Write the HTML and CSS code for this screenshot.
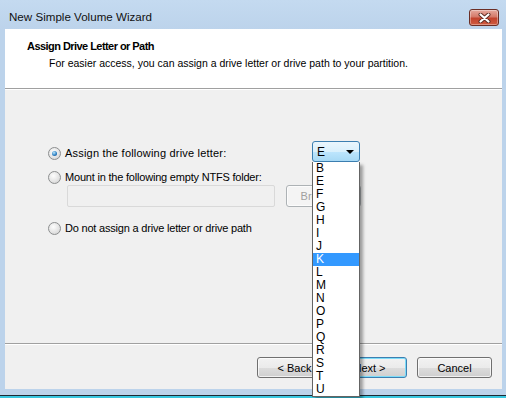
FILE: index.html
```html
<!DOCTYPE html>
<html lang="en">
<head>
  <meta charset="UTF-8" />
  <title>New Simple Volume Wizard</title>
  <link rel="stylesheet" href="styles.css">
</head>
<body>

  <div class="window">
    <div class="titlebar">
      <span class="caption">New Simple Volume Wizard</span>
      <button class="close-btn" title="Close">
        <svg width="13" height="10" viewBox="0 0 13 10">
          <path d="M2.5 1.5 L10.5 8.5 M10.5 1.5 L2.5 8.5" stroke="#5a2a22" stroke-width="4" stroke-linecap="round"/>
          <path d="M2.5 1.5 L10.5 8.5 M10.5 1.5 L2.5 8.5" stroke="#fff" stroke-width="2.2" stroke-linecap="round"/>
        </svg>
      </button>
    </div>

    <div class="client">
      <div class="header">
        <div class="header-title">Assign Drive Letter or Path</div>
        <div class="header-sub">For easier access, you can assign a drive letter or drive path to your partition.</div>
      </div>
      <div class="separator"></div>

      <div class="page">
        <div class="row-letter">
          <label class="option wide">
            <span class="radio checked"></span>
            <span>Assign the following drive letter:</span>
          </label>
          <div class="combo">
            <div class="combo-box">
              <span>E</span>
              <span class="arrow"></span>
            </div>
            <ul class="combo-list">
              <li>B</li><li>E</li><li>F</li><li>G</li><li>H</li><li>I</li>
              <li>J</li><li class="selected">K</li><li>L</li><li>M</li><li>N</li>
              <li>O</li><li>P</li><li>Q</li><li>R</li><li>S</li><li>T</li>
              <li>U</li>
            </ul>
          </div>
        </div>

        <label class="option narrow row-mount">
          <span class="radio"></span>
          <span>Mount in the following empty NTFS folder:</span>
        </label>
        <div class="folder-row">
          <div class="folder-input"></div>
          <button class="btn" disabled>Browse...</button>
        </div>

        <label class="option narrow row-none">
          <span class="radio"></span>
          <span>Do not assign a drive letter or drive path</span>
        </label>
      </div>

      <div class="separator"></div>
      <div class="footer">
        <button class="btn">&lt; Back</button>
        <button class="btn default">Next &gt;</button>
        <button class="btn cancel">Cancel</button>
      </div>
    </div>

    <div class="frame-bottom"></div>
    <div class="taskbar-edge"></div>
  </div>

</body>
</html>
```

FILE: styles.css
```css
:root {
  --frame: #bcd3eb;
  --face: #f0f0f0;
  --text: #000;
}

html, body {
  margin: 0;
  height: 100%;
  overflow: hidden;
}

body {
  background: var(--frame);
  font-family: "Liberation Sans", Arial, sans-serif;
  font-size: 11px;
  color: var(--text);
}

.window {
  width: 506px;
  height: 398px;
  display: flex;
  flex-direction: column;
  background: linear-gradient(#c4daf0, var(--frame) 30px);
}

/* title bar */
.titlebar {
  height: 29px;
  display: flex;
  align-items: flex-start;
  justify-content: space-between;
  box-sizing: border-box;
  padding: 10px 7px 0 9px;
}

.caption {
  font-size: 11.6px;
  line-height: 14px;
  color: #111;
}

.close-btn {
  margin-top: -1px;
  width: 30px;
  height: 17px;
  padding: 0;
  border: 1px solid #6b2e25;
  border-radius: 3px;
  background: linear-gradient(#e6a99e, #d57a6a 45%, #c2432e 55%, #cf5b40);
  box-shadow: inset 0 0 0 1px rgba(255, 255, 255, 0.35);
  display: flex;
  align-items: center;
  justify-content: center;
}

/* client area */
.client {
  margin: 0 4px 0 5px;
  height: 360px;
  display: flex;
  flex-direction: column;
  background: var(--face);
}

.header {
  height: 59px;
  background: #fff;
  box-sizing: border-box;
  padding: 11px 0 0 22px;
}

.header-title {
  font-weight: bold;
  font-size: 11px;
  line-height: 13px;
  letter-spacing: -0.55px;
}

.header-sub {
  margin: 4px 0 0 22px;
  font-size: 10.5px;
  line-height: 13px;
}

.separator {
  height: 1px;
  background: #a0a0a0;
  border-bottom: 1px solid #fff;
}

.page {
  height: 253px;
  box-sizing: border-box;
  padding: 51px 0 0 43px;
}

.row-letter {
  display: flex;
  align-items: center;
  height: 21px;
}

.row-letter .option {
  width: 264px;
  margin-top: 3px;
}

.option {
  display: flex;
  align-items: center;
  gap: 4px;
  height: 13px;
  line-height: 13px;
}

.option.wide {
  letter-spacing: 0.2px;
}

.option.narrow {
  letter-spacing: -0.2px;
}

.row-mount {
  margin-top: 9px;
}

.row-none {
  margin-top: 15px;
}

.radio {
  width: 13px;
  height: 13px;
  box-sizing: border-box;
  border-radius: 50%;
  border: 1px solid #8c8e8f;
  background: radial-gradient(circle at 40% 35%, #fdfdfd, #e2e2e2 60%, #cbcbcb);
  position: relative;
  flex: none;
}

.radio.checked::after {
  content: "";
  position: absolute;
  left: 3px;
  top: 3px;
  width: 5px;
  height: 5px;
  border-radius: 50%;
  background: radial-gradient(circle at 40% 35%, #bfe8fb, #2f83c6 55%, #0f3f78);
}

.folder-row {
  display: flex;
  gap: 11px;
  margin: 1px 0 0 19px;
}

.folder-input {
  width: 208px;
  height: 22px;
  box-sizing: border-box;
  border: 1px solid #d9d9d9;
  border-radius: 2px;
  background: var(--face);
}

/* combo with open drop-down */
.combo {
  position: relative;
  z-index: 5;
}

.combo-box {
  width: 48px;
  height: 21px;
  box-sizing: border-box;
  border: 1px solid #3c7fb1;
  border-radius: 3px;
  background: linear-gradient(#eaf6fd, #d9f0fc 50%, #bee6fd 50%, #a7d9f5);
  display: flex;
  align-items: center;
  justify-content: space-between;
  padding: 0 5px 0 4px;
  font-size: 12px;
}

.arrow {
  width: 0;
  height: 0;
  border-left: 4px solid transparent;
  border-right: 4px solid transparent;
  border-top: 4px solid #000;
}

.combo-list {
  position: absolute;
  left: 0;
  top: 21px;
  width: 48px;
  margin: 0;
  padding: 0;
  list-style: none;
  box-sizing: border-box;
  border: 1px solid #646464;
  border-top: none;
  background: #fff;
  box-shadow: 3px 3px 3px rgba(0, 0, 0, 0.35);
}

.combo-list li {
  height: 13px;
  line-height: 13px;
  padding-left: 3px;
  font-size: 12px;
}

.combo-list .selected {
  background: #3399ff;
  color: #fff;
}

/* buttons */
.btn {
  width: 75px;
  height: 21px;
  padding: 0;
  font-family: inherit;
  font-size: 11px;
  color: #000;
  border: 1px solid #707070;
  border-radius: 3px;
  background: linear-gradient(#f2f2f2, #ebebeb 50%, #dddddd 50%, #cfcfcf);
  box-shadow: inset 0 0 0 1px rgba(255, 255, 255, 0.7);
}

.btn:disabled {
  color: #a0a0a0;
  border-color: #adb2b5;
  background: #f4f4f4;
  height: 22px;
}

.btn.default {
  border-color: #3c7fb1;
  box-shadow: inset 0 0 0 1px #7ddcf8;
}

.footer {
  flex: 1;
  display: flex;
  justify-content: flex-end;
  align-items: flex-start;
  padding: 12px 10px 0 0;
}

.cancel {
  margin-left: 10px;
}

.frame-bottom {
  height: 6px;
}

.taskbar-edge {
  height: 2px;
  border-top: 1px solid #1c2a33;
  background: #38c6e0;
}
```
